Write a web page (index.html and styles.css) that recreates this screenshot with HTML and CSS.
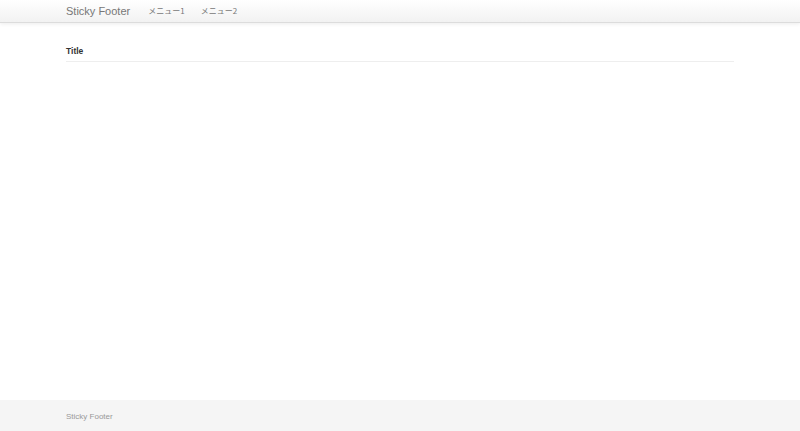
FILE: index.html
```html
<!DOCTYPE html>
<html lang="ja">
<head>
<meta charset="utf-8">
<title>Sticky Footer</title>
<link rel="stylesheet" href="styles.css">
</head>
<body>
<div class="wrap">
  <header class="navbar">
    <div class="container nav-inner">
      <a class="brand" href="#">Sticky Footer</a>
      <ul class="nav">
        <li><a href="#">メニュー1</a></li>
        <li><a href="#">メニュー2</a></li>
      </ul>
    </div>
  </header>
  <main class="container main">
    <div class="page-header">
      <h1>Title</h1>
    </div>
  </main>
  <footer class="footer">
    <div class="container">
      <p class="credit">Sticky Footer</p>
    </div>
  </footer>
</div>
</body>
</html>
```
FILE: styles.css
```css
html, body {
  margin: 0;
  padding: 0;
  height: 100%;
}
body {
  font-family: "Liberation Sans", Arial, "Noto Sans CJK JP", sans-serif;
  color: #333;
  background: #fff;
}
.wrap {
  display: flex;
  flex-direction: column;
  min-height: 100%;
}
.container {
  width: 668px;
  margin: 0 auto;
}
.navbar {
  height: 22px;
  background: linear-gradient(to bottom, #ffffff, #f2f2f2);
  border-bottom: 1px solid #dcdcdc;
  box-shadow: 0 1px 4px rgba(0,0,0,0.08);
}
.nav-inner {
  display: flex;
  align-items: center;
  height: 22px;
}
.brand {
  font-size: 11px;
  color: #777;
  text-decoration: none;
  margin-right: 18px;
  line-height: 22px;
}
.nav {
  display: flex;
  list-style: none;
  margin: 0;
  padding: 0;
  gap: 16px;
}
.nav a {
  font-size: 8px;
  color: #777;
  text-decoration: none;
  line-height: 22px;
  font-family: "Noto Sans CJK JP", "Liberation Sans", sans-serif;
}
.main {
  flex: 1;
}
.page-header {
  margin-top: 23px;
  border-bottom: 1px solid #eee;
  padding-bottom: 4px;
}
.page-header h1 {
  margin: 0;
  font-size: 8.5px;
  font-weight: bold;
  color: #333;
  line-height: 11px;
}
.footer {
  background: #f5f5f5;
  height: 31px;
  display: flex;
  align-items: center;
}
.credit {
  margin: 0;
  padding-top: 2px;
  font-size: 8px;
  color: #999;
}
```
